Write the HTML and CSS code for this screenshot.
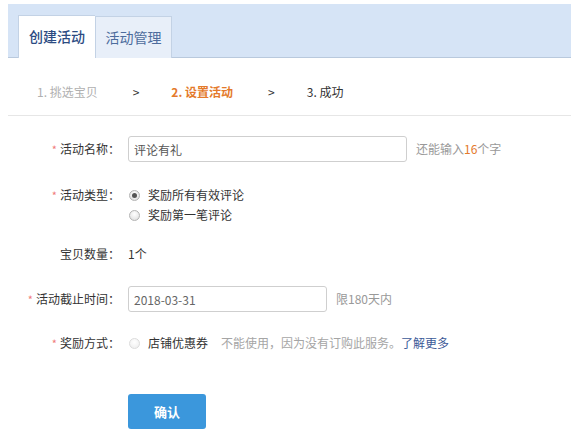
FILE: index.html
```html
<!DOCTYPE html>
<html lang="zh">
<head>
    <meta charset="UTF-8">
    <meta name="viewport" content="width=device-width, initial-scale=1.0">
    <title>创建活动</title>
    <link rel="stylesheet" href="styles.css">
</head>
<body>

    <div class="page">
        <div class="tabs">
            <div class="tab active">创建活动</div>
            <div class="tab">活动管理</div>
        </div>

        <div class="steps">
            <span class="step done">1. 挑选宝贝</span>
            <span class="arrow">&gt;</span>
            <span class="step current">2. 设置活动</span>
            <span class="arrow">&gt;</span>
            <span class="step">3. 成功</span>
        </div>

        <div class="form">
            <div class="row row-name">
                <label class="label"><span class="star">*</span>活动名称：</label>
                <input class="text-input name-input" type="text" value="评论有礼">
                <span class="hint">还能输入<em>16</em>个字</span>
            </div>

            <div class="row row-type">
                <label class="label"><span class="star">*</span>活动类型：</label>
                <div class="radios">
                    <div class="radio-line"><span class="radio checked"></span>奖励所有有效评论</div>
                    <div class="radio-line"><span class="radio"></span>奖励第一笔评论</div>
                </div>
            </div>

            <div class="row row-count">
                <label class="label">宝贝数量：</label>
                <span class="value">1个</span>
            </div>

            <div class="row row-date">
                <label class="label"><span class="star">*</span>活动截止时间：</label>
                <input class="text-input date-input" type="text" value="2018-03-31">
                <span class="hint">限180天内</span>
            </div>

            <div class="row row-reward">
                <label class="label"><span class="star">*</span>奖励方式：</label>
                <div class="radio-line"><span class="radio disabled"></span>店铺优惠券</div>
                <span class="note">不能使用，因为没有订购此服务。<a href="#">了解更多</a></span>
            </div>

            <button class="submit">确认</button>
        </div>
    </div>

</body>
</html>
```

FILE: styles.css
```css
* { margin: 0; padding: 0; box-sizing: border-box; font-family: "Noto Sans CJK SC", "Liberation Sans", sans-serif; }
body { background: #fff; color: #333; font-size: 12px; }
.page { padding: 4px 0 0 8px; }

.tabs { display: flex; align-items: flex-end; height: 54px; padding-left: 10px; background: #d6e4f6; border-bottom: 1px solid #b9c9dd; }
.tab { width: 77px; height: 42px; line-height: 40px; text-align: center; font-size: 14px; color: #4d6c9d; background: #e8eff9; border: 1px solid #c3d2e5; border-bottom: none; margin-bottom: -1px; }
.tab.active { background: #fff; color: #2c4b82; font-weight: 500; height: 43px; border-right: none; }

.steps { display: flex; align-items: center; padding: 25px 0 15px 29px; border-bottom: 1px solid #e6e6e6; line-height: 17px; font-size: 12px; }
.step { color: #333; }
.step.done { color: #b0b0b0; }
.step.current { color: #e47a2b; font-weight: bold; }
.arrow { margin: 0 32px 0 35px; color: #333; }

.form { padding-top: 20px; }
.row { display: flex; align-items: flex-start; }
.label { width: 112px; margin-right: 8px; text-align: right; line-height: 20px; color: #333; }
.star { color: #f07b7b; margin-right: 3px; font-size: 11px; }

.row-name .label, .row-date .label { line-height: 26px; }
.text-input { height: 26px; padding: 0 5px; border: 1px solid #cfcfcf; border-radius: 3px; font-size: 12px; color: #555; outline: none; }
.name-input { width: 279px; }
.date-input { width: 199px; color: #666; }
.hint { margin-left: 9px; line-height: 26px; color: #999; }
.hint em { font-style: normal; color: #e47a2b; }

.row-type { margin-top: 23px; }
.radio-line { display: flex; align-items: center; height: 20px; line-height: 20px; color: #333; }
.radio { width: 11px; height: 11px; margin: 0 8px 0 1px; border-radius: 50%; border: 1px solid #b4b4b4; background: radial-gradient(circle at 50% 35%, #fff 0%, #e6e6e6 70%, #d2d2d2 100%); position: relative; }
.radio.checked::after { content: ""; position: absolute; left: 2px; top: 2px; width: 5px; height: 5px; border-radius: 50%; background: #555; }
.radio.disabled { border-color: #dcdcdc; background: radial-gradient(circle at 50% 35%, #fff 0%, #f0f0f0 80%); }

.row-count { margin-top: 19px; }
.value { line-height: 20px; color: #333; }

.row-date { margin-top: 22px; }

.row-reward { margin-top: 21px; }
.note { margin-left: 13px; line-height: 20px; color: #a5a5a5; }
.note a { color: #3c5a98; text-decoration: none; }

.submit { display: block; margin: 41px 0 0 120px; width: 78px; height: 35px; border: none; border-radius: 3px; background: #3b97dc; color: #fff; font-size: 13px; font-weight: bold; cursor: pointer; }
```
